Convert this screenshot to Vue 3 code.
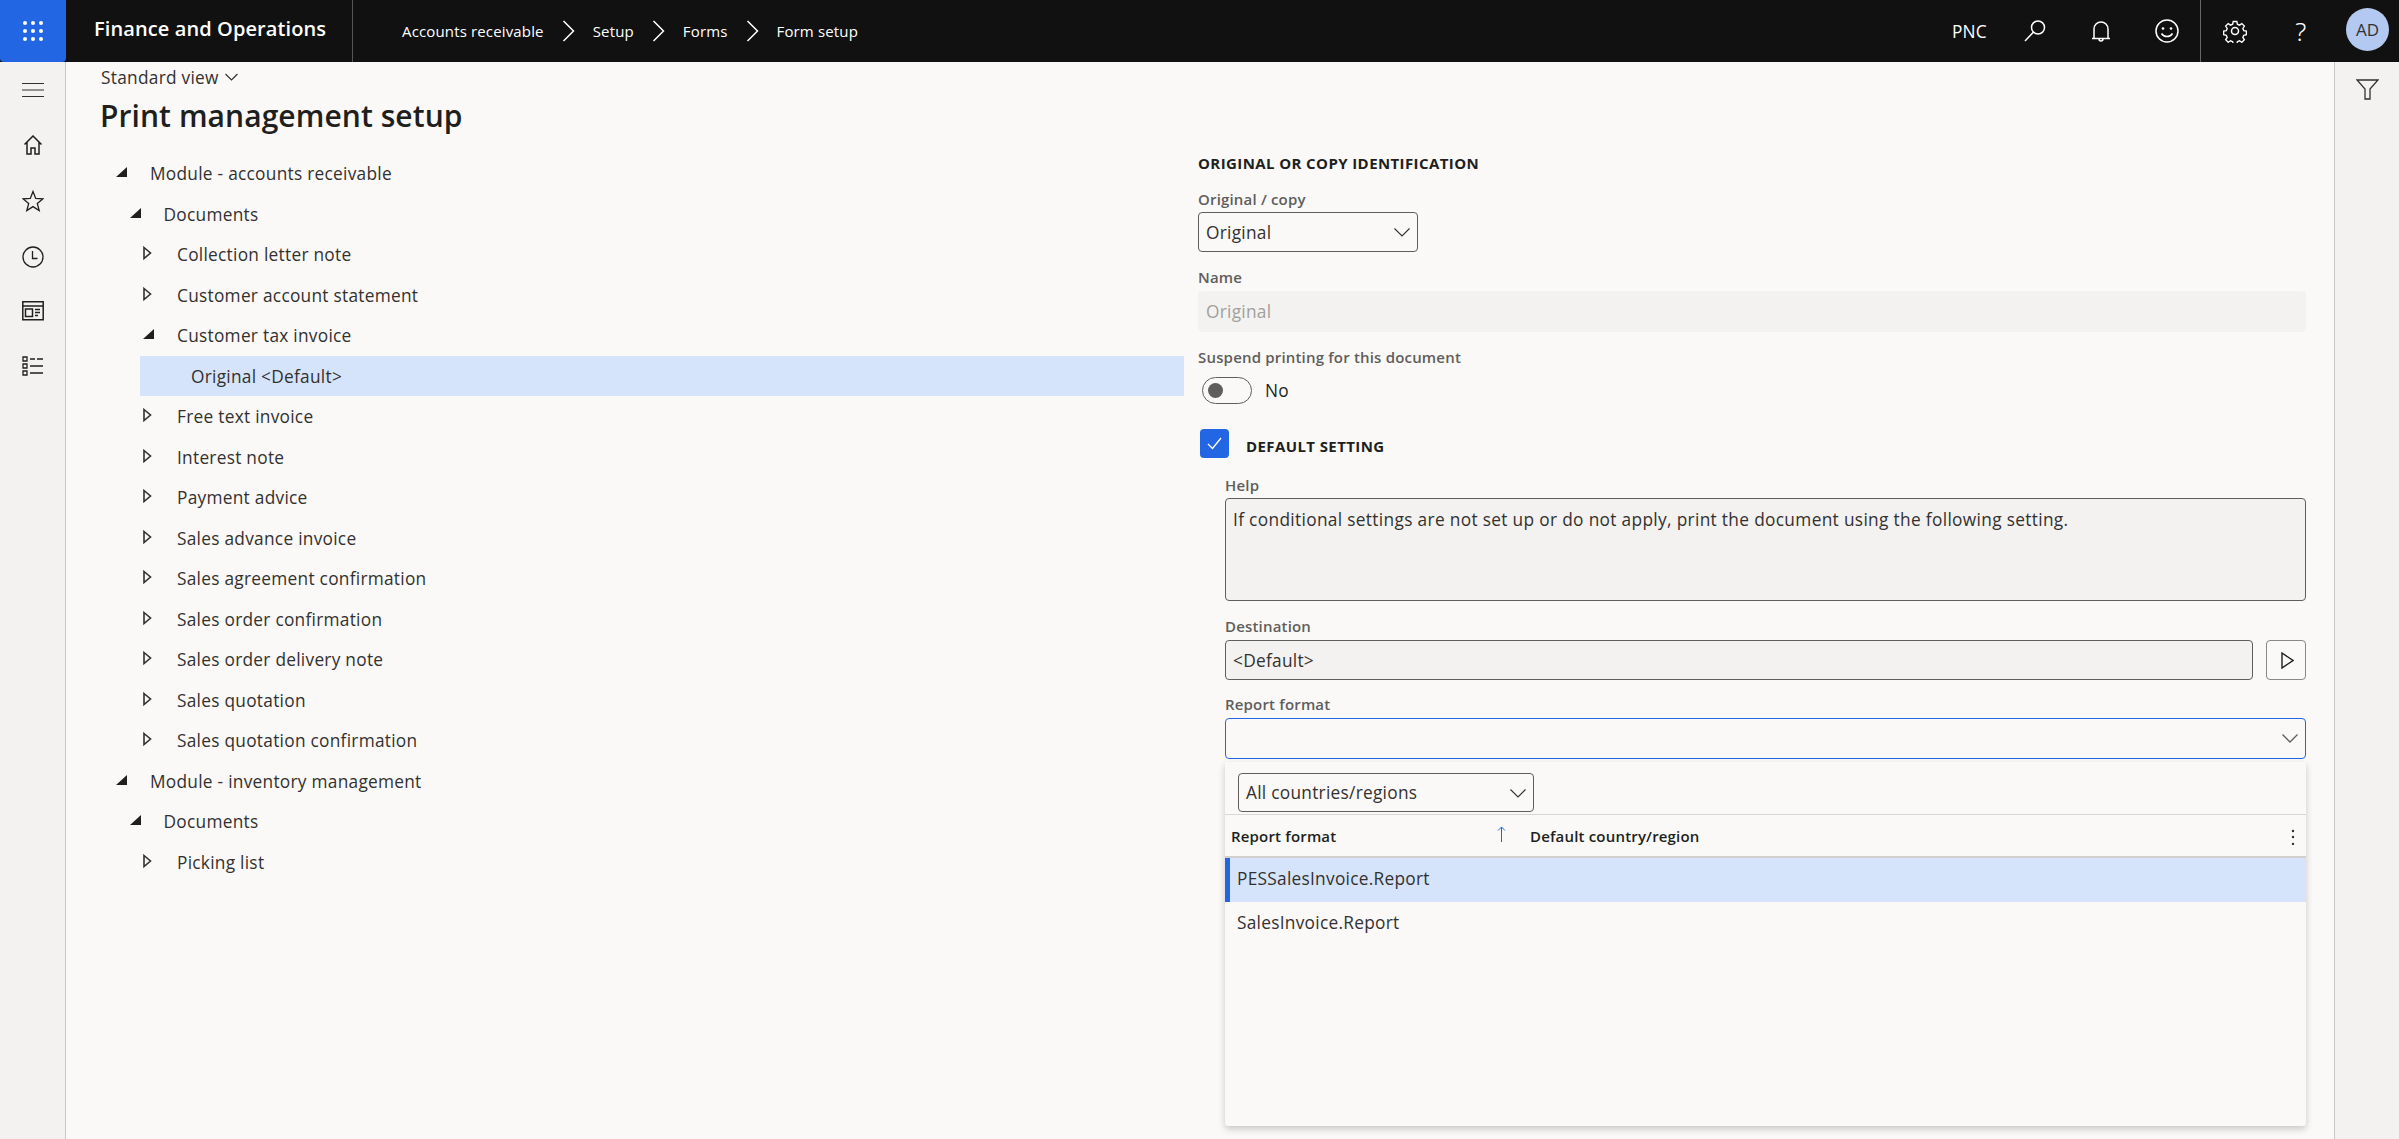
<template>
  <div class="app">
    <header class="topbar">
      <button class="waffle">
        <svg width="20" height="20" viewBox="0 0 20 20" fill="#fff">
          <template v-for="row in [2, 10, 18]" :key="row">
            <circle v-for="col in [2, 10, 18]" :key="col" :cx="col" :cy="row" r="2" />
          </template>
        </svg>
      </button>
      <div class="brand">Finance and Operations</div>
      <nav class="crumbs">
        <template v-for="(crumb, i) in crumbs" :key="crumb">
          <span>{{ crumb }}</span>
          <svg v-if="i < crumbs.length - 1" class="crumb-sep" width="13" height="22" viewBox="0 0 13 22" fill="none" stroke="#fff" stroke-width="1.5">
            <path d="M1.5 1l10 10-10 10" />
          </svg>
        </template>
      </nav>
      <div class="top-right">
        <span class="company">PNC</span>
        <span class="top-icon">
          <svg width="24" height="24" viewBox="0 0 24 24" fill="none" stroke="#fff" stroke-width="1.5">
            <circle cx="15" cy="8.5" r="6.5" />
            <path d="M10.3 13.2L2 22" />
          </svg>
        </span>
        <span class="top-icon">
          <svg width="24" height="24" viewBox="0 0 24 24" fill="none" stroke="#fff" stroke-width="1.5">
            <path d="M5 19.5V10a7 7 0 0 1 14 0v9.500M3 19.500h18M10 20a2 2 0 0 0 4 0" />
          </svg>
        </span>
        <span class="top-icon">
          <svg width="24" height="24" viewBox="0 0 24 24" fill="none" stroke="#fff" stroke-width="1.500">
            <circle cx="12" cy="12" r="11" />
            <circle cx="8" cy="9.500" r="1.300" fill="#fff" stroke="none" />
            <circle cx="16" cy="9.500" r="1.300" fill="#fff" stroke="none" />
            <path d="M6.500 14.500c2.500 4 8.500 4 11 0" />
          </svg>
        </span>
        <span class="top-sep"></span>
        <span class="top-icon">
          <svg width="24" height="24" viewBox="0 0 24 24" fill="none" stroke="#fff" stroke-width="1.500">
            <circle cx="12" cy="12" r="3.500" />
            <path d="M10 1.500h4l.6 3 2.300 1 2.600-1.700 2.800 2.800-1.700 2.600 1 2.300 2.900.6v4l-2.900.6-1 2.300 1.700 2.600-2.800 2.800-2.600-1.700-2.300 1-.6 2.800h-4l-.6-2.800-2.300-1-2.600 1.700-2.800-2.800 1.700-2.600-1-2.300-2.900-.6v-4l2.900-.6 1-2.300L1.700 6.600l2.800-2.800 2.600 1.700 2.300-1z" transform="translate(1.100 1.100) scale(.91)" />
          </svg>
        </span>
        <span class="top-icon help">?</span>
        <span class="avatar">AD</span>
      </div>
    </header>

    <div class="body">
      <aside class="nav-rail">
        <svg width="22" height="22" viewBox="0 0 22 22" fill="none" stroke="#323130" stroke-width="1.200">
          <path d="M0 4.500h22M0 11h22M0 17.500h22" />
        </svg>
        <svg width="22" height="22" viewBox="0 0 22 22" fill="none" stroke="#201f1e" stroke-width="1.500">
          <path d="M2.500 9.500L11 1l8.500 8.500M5 7.500V19h4v-6h4v6h4V7.500" />
        </svg>
        <svg width="22" height="22" viewBox="0 0 22 22" fill="none" stroke="#201f1e" stroke-width="1.300">
          <path d="M11 1.500l2.700 6.900 7.300.4-5.700 4.700 1.900 7.100L11 16.600l-6.200 4 1.900-7.100L1 8.800l7.300-.4z" />
        </svg>
        <svg width="22" height="22" viewBox="0 0 22 22" fill="none" stroke="#201f1e" stroke-width="1.300">
          <circle cx="11" cy="11" r="10" />
          <path d="M10.500 5v7.500h5" />
        </svg>
        <svg width="22" height="20" viewBox="0 0 22 20" fill="none" stroke="#201f1e" stroke-width="1.500">
          <path d="M.8.800h20.400v18H.8zM.8 5h20.400M3.500 8h7v7.500h-7zM13 8.500h5M13 11.500h5M13 14.500h3" />
        </svg>
        <svg width="22" height="22" viewBox="0 0 22 22" fill="none" stroke="#201f1e" stroke-width="1.300">
          <path d="M1 2h4v4H1zM1 9h4v4H1zM1 16h4v4H1zM8 4h5M15 4h6M8 11h13M8 18h13" />
        </svg>
      </aside>

      <main class="content">
        <div class="view-picker">
          Standard view
          <svg width="13" height="8" viewBox="0 0 13 8" fill="none" stroke="#323130" stroke-width="1.200"><path d="M.5 1l6 6 6-6" /></svg>
        </div>
        <h1 class="page-title">Print management setup</h1>

        <div class="columns">
          <ul class="tree">
            <li
              v-for="node in treeNodes"
              :key="node.id"
              class="tree-row"
              :class="{ selected: node.selected }"
              :style="{ paddingLeft: node.indent + 'px', marginLeft: node.offset + 'px' }"
            >
              <span v-if="node.state" class="tree-glyph">
                <svg v-if="node.state === 'open'" width="12" height="12" viewBox="0 0 12 12" fill="#201f1e"><path d="M11 1v10H0z" /></svg>
                <svg v-else width="9" height="14" viewBox="0 0 9 14" fill="none" stroke="#323130" stroke-width="1.600"><path d="M1 1.500L7.500 7 1 12.500z" /></svg>
              </span>
              {{ node.label }}
            </li>
          </ul>

          <section class="form">
            <h2 class="section-head">ORIGINAL OR COPY IDENTIFICATION</h2>

            <label class="field-label first">Original / copy</label>
            <div class="control select short">
              Original
              <svg class="chev" width="16" height="9" viewBox="0 0 16 9" fill="none" stroke="#323130" stroke-width="1.100"><path d="M.5.500L8 8 15.500.500" /></svg>
            </div>

            <label class="field-label">Name</label>
            <div class="control disabled">Original</div>

            <label class="field-label">Suspend printing for this document</label>
            <div class="toggle-row">
              <span class="toggle"><span class="knob"></span></span>
              <span>No</span>
            </div>

            <div class="default-row">
              <span class="checkbox">
                <svg width="15" height="13" viewBox="0 0 15 13" fill="none" stroke="#fff" stroke-width="1.400"><path d="M1 7l4.500 4.500L14 1" /></svg>
              </span>
              <h2 class="section-head">DEFAULT SETTING</h2>
            </div>

            <div class="indented">
              <label class="field-label help-label">Help</label>
              <div class="control readonly help-box">If conditional settings are not set up or do not apply, print the document using the following setting.</div>

              <label class="field-label">Destination</label>
              <div class="dest-row">
                <div class="control readonly grow">&lt;Default&gt;</div>
                <button class="play-btn">
                  <svg width="13" height="17" viewBox="0 0 13 17" fill="none" stroke="#201f1e" stroke-width="1.400"><path d="M1 1l11 7.500L1 16z" /></svg>
                </button>
              </div>

              <label class="field-label report-label">Report format</label>
              <div class="lookup-wrap">
                <div class="control select focused">
                  <svg class="chev" width="16" height="9" viewBox="0 0 16 9" fill="none" stroke="#605e5c" stroke-width="1.300"><path d="M.5.500L8 8 15.500.500" /></svg>
                </div>

                <div class="lookup">
                  <div class="lookup-filter">
                    <div class="control select filter">
                      All countries/regions
                      <svg class="chev" width="16" height="9" viewBox="0 0 16 9" fill="none" stroke="#323130" stroke-width="1.100"><path d="M.5.500L8 8 15.500.500" /></svg>
                    </div>
                  </div>
                  <div class="grid-head">
                    <span class="col-one">
                      Report format
                      <svg class="sort" width="9" height="16" viewBox="0 0 9 16" fill="none" stroke="#2266e3" stroke-width="1"><path d="M4.500 16V1M1 4.500L4.500 1 8 4.500" /></svg>
                    </span>
                    <span class="col-two">Default country/region</span>
                    <svg class="dots" width="4" height="16" viewBox="0 0 4 16" fill="#323130">
                      <circle cx="2" cy="2" r="1.200" />
                      <circle cx="2" cy="8" r="1.200" />
                      <circle cx="2" cy="15" r="1.200" />
                    </svg>
                  </div>
                  <div
                    v-for="(format, i) in formats"
                    :key="format"
                    class="grid-row"
                    :class="{ active: i === 0 }"
                  >{{ format }}</div>
                </div>
              </div>
            </div>
          </section>
        </div>
      </main>

      <aside class="filter-rail">
        <svg width="23" height="21" viewBox="0 0 23 21" fill="none" stroke="#323130" stroke-width="1.300">
          <path d="M1 1h21l-8 9v10H9V10z" />
        </svg>
      </aside>
    </div>
  </div>
</template>

<script setup>
import { computed } from 'vue';

const crumbs = ['Accounts receivable', 'Setup', 'Forms', 'Form setup'];
const formats = ['PESSalesInvoice.Report', 'SalesInvoice.Report'];

const tree = [
  { label: 'Module - accounts receivable', level: 0, state: 'open' },
  { label: 'Documents', level: 1, state: 'open' },
  { label: 'Collection letter note', level: 2, state: 'closed' },
  { label: 'Customer account statement', level: 2, state: 'closed' },
  { label: 'Customer tax invoice', level: 2, state: 'open' },
  { label: 'Original <Default>', level: 3, selected: true },
  { label: 'Free text invoice', level: 2, state: 'closed' },
  { label: 'Interest note', level: 2, state: 'closed' },
  { label: 'Payment advice', level: 2, state: 'closed' },
  { label: 'Sales advance invoice', level: 2, state: 'closed' },
  { label: 'Sales agreement confirmation', level: 2, state: 'closed' },
  { label: 'Sales order confirmation', level: 2, state: 'closed' },
  { label: 'Sales order delivery note', level: 2, state: 'closed' },
  { label: 'Sales quotation', level: 2, state: 'closed' },
  { label: 'Sales quotation confirmation', level: 2, state: 'closed' },
  { label: 'Module - inventory management', level: 0, state: 'open' },
  { label: 'Documents', level: 1, state: 'open' },
  { label: 'Picking list', level: 2, state: 'closed' },
];

const treeNodes = computed(() =>
  tree.map((node, i) => ({
    ...node,
    id: i,
    offset: node.level === 3 ? 39 : 0,
    indent: node.level === 3 ? 51 : 15 + node.level * 13.5,
  }))
);
</script>

<style>
html, body { margin: 0; background: #faf9f7; }
</style>

<style scoped>
.app {
  width: 2399px;
  height: 1139px;
  overflow: hidden;
  display: flex;
  flex-direction: column;
  background: #faf9f7;
  color: #201f1e;
  font-family: "Open Sans", "Noto Sans", sans-serif;
  font-size: 17.300px;
  letter-spacing: 0.270px;
}

.topbar {
  height: 62px;
  flex: none;
  display: flex;
  align-items: center;
  background: #111;
  color: #fff;
}
.waffle {
  width: 66px;
  height: 62px;
  border: 0;
  padding: 0;
  background: #2266e3;
  border-radius: 0 0 4px 4px;
  display: flex;
  align-items: center;
  justify-content: center;
}
.brand {
  width: 287px;
  height: 62px;
  box-sizing: border-box;
  padding-left: 28px;
  line-height: 58px;
  font-size: 20px;
  font-weight: 600;
  letter-spacing: 0.100px;
  border-right: 1px solid #555;
}
.crumbs {
  display: flex;
  align-items: center;
  gap: 18px;
  margin-left: 49px;
  font-size: 15px;
  letter-spacing: 0.150px;
}
.top-right {
  margin-left: auto;
  display: flex;
  align-items: center;
  height: 62px;
}
.company { margin-right: 15px; }
.top-icon {
  width: 66px;
  display: flex;
  justify-content: center;
  align-items: center;
}
.top-sep { width: 1px; height: 62px; background: #666; margin-right: 1px; }
.help { font-size: 26px; font-weight: 300; font-family: "Noto Sans", sans-serif; }
.avatar {
  width: 43px;
  height: 43px;
  margin: 0 10px 3px 12px;
  border-radius: 50%;
  background: #b4c9f2;
  color: #323130;
  font-size: 17px;
  letter-spacing: 0;
  text-align: center;
  line-height: 43px;
}

.body {
  flex: 1;
  min-height: 0;
  display: flex;
}
.nav-rail {
  width: 65px;
  flex: none;
  box-sizing: content-box;
  border-right: 1px solid #c8c6c4;
  background: #f3f2f0;
  display: flex;
  flex-direction: column;
  align-items: center;
  gap: 33.500px;
  padding-top: 17px;
}
.filter-rail {
  width: 64px;
  flex: none;
  border-left: 1px solid #c8c6c4;
  background: #f3f2f0;
  display: flex;
  justify-content: center;
  padding-top: 17px;
  box-sizing: content-box;
}
.filter-rail svg { flex: none; }

.content {
  flex: 1;
  min-width: 0;
  padding: 0 28px 0 35px;
  position: relative;
}
.view-picker {
  height: 30px;
  display: flex;
  align-items: center;
  gap: 6px;
  color: #323130;
}
.page-title {
  margin: 0 0 0 -1px;
  height: 61px;
  font-size: 30px;
  line-height: 48px;
  font-weight: 600;
  letter-spacing: 0.070px;
}

.columns {
  display: grid;
  grid-template-columns: 1083px 1fr;
  column-gap: 14px;
}

.tree {
  list-style: none;
  margin: 0;
  padding: 0;
}
.tree-row {
  height: 40.500px;
  box-sizing: border-box;
  padding-top: 1px;
  display: flex;
  align-items: center;
  color: #323130;
}
.tree-row.selected { background: #d6e4fb; }
.tree-glyph {
  width: 34px;
  flex: none;
  display: flex;
  align-items: center;
  margin-top: -3px;
}

.section-head {
  margin: 0;
  font-size: 15px;
  line-height: 20px;
  font-weight: 700;
  letter-spacing: 0.400px;
}
.field-label {
  display: block;
  margin-top: 16px;
  height: 20px;
  line-height: 18px;
  font-size: 15px;
  font-weight: 600;
  letter-spacing: 0.180px;
  color: #605e5c;
}
.field-label.first { margin-top: 17px; }
.help-label { margin-top: 18px; }
.report-label { margin-top: 15px; }

.control {
  box-sizing: border-box;
  height: 40px;
  margin-top: 2px;
  padding: 0 7px;
  border: 1px solid #605e5c;
  border-radius: 4px;
  display: flex;
  align-items: center;
  color: #323130;
}
.select { position: relative; }
.chev { position: absolute; right: 7px; top: 15px; }
.short { width: 220px; }
.disabled {
  height: 41px;
  margin-top: 3px;
  border-color: #f3f2f0;
  background: #f3f2f0;
  color: #a19f9d;
}
.readonly { background: #f3f2f0; }
.help-box {
  height: 103px;
  align-items: flex-start;
  padding-top: 9px;
  line-height: 24px;
  letter-spacing: 0.330px;
}
.focused {
  height: 41px;
  margin-top: 3px;
  border-color: #2266e3;
}

.toggle-row {
  display: flex;
  align-items: center;
  gap: 13px;
  margin: 9px 0 0 4px;
  height: 27px;
}
.toggle {
  box-sizing: border-box;
  width: 50px;
  height: 27px;
  border: 1px solid #605e5c;
  border-radius: 14px;
  display: flex;
  align-items: center;
  padding-left: 5px;
}
.knob {
  width: 15px;
  height: 15px;
  border-radius: 50%;
  background: #605e5c;
}

.default-row {
  display: flex;
  margin: 25px 0 0 2px;
  gap: 17px;
}
.default-row .section-head { margin-top: 7px; }
.checkbox {
  width: 29px;
  height: 29px;
  border-radius: 4px;
  background: #2266e3;
  display: flex;
  align-items: center;
  justify-content: center;
}

.indented { padding-left: 27px; }
.dest-row {
  display: flex;
  gap: 13px;
  margin-top: 3px;
}
.dest-row .control,
.dest-row .play-btn { margin-top: 0; }
.grow { flex: 1; }
.play-btn {
  box-sizing: border-box;
  width: 40px;
  height: 40px;
  padding: 0 0 0 3px;
  background: transparent;
  border: 1px solid #8a8886;
  border-radius: 4px;
  display: flex;
  align-items: center;
  justify-content: center;
}

.lookup-wrap { position: relative; }
.lookup {
  position: absolute;
  top: 44px;
  left: 0;
  right: 0;
  height: 364px;
  background: #faf9f7;
  box-shadow: 0 3px 7px rgba(0, 0, 0, 0.2);
  border-radius: 0 0 3px 3px;
}
.lookup-filter {
  height: 53px;
  box-sizing: border-box;
  padding: 11px 0 0 13px;
  border-bottom: 1px solid #d8d6d4;
}
.filter {
  width: 296px;
  height: 39px;
  margin: 0;
}
.grid-head {
  position: relative;
  display: flex;
  align-items: center;
  height: 43px;
  box-sizing: border-box;
  border-bottom: 2px solid #d2d0ce;
  padding-left: 6px;
  font-size: 15px;
  font-weight: 600;
  letter-spacing: 0.180px;
}
.col-one {
  width: 299px;
  position: relative;
}
.sort { position: absolute; left: 266px; top: 0; }
.dots { position: absolute; right: 11px; top: 14px; }
.grid-row {
  height: 44px;
  display: flex;
  align-items: center;
  box-sizing: border-box;
  padding: 0 0 4px 12px;
  color: #323130;
}
.grid-row.active {
  background: #d6e4fb;
  border-left: 5px solid #2266e3;
  padding-left: 7px;
}
</style>
